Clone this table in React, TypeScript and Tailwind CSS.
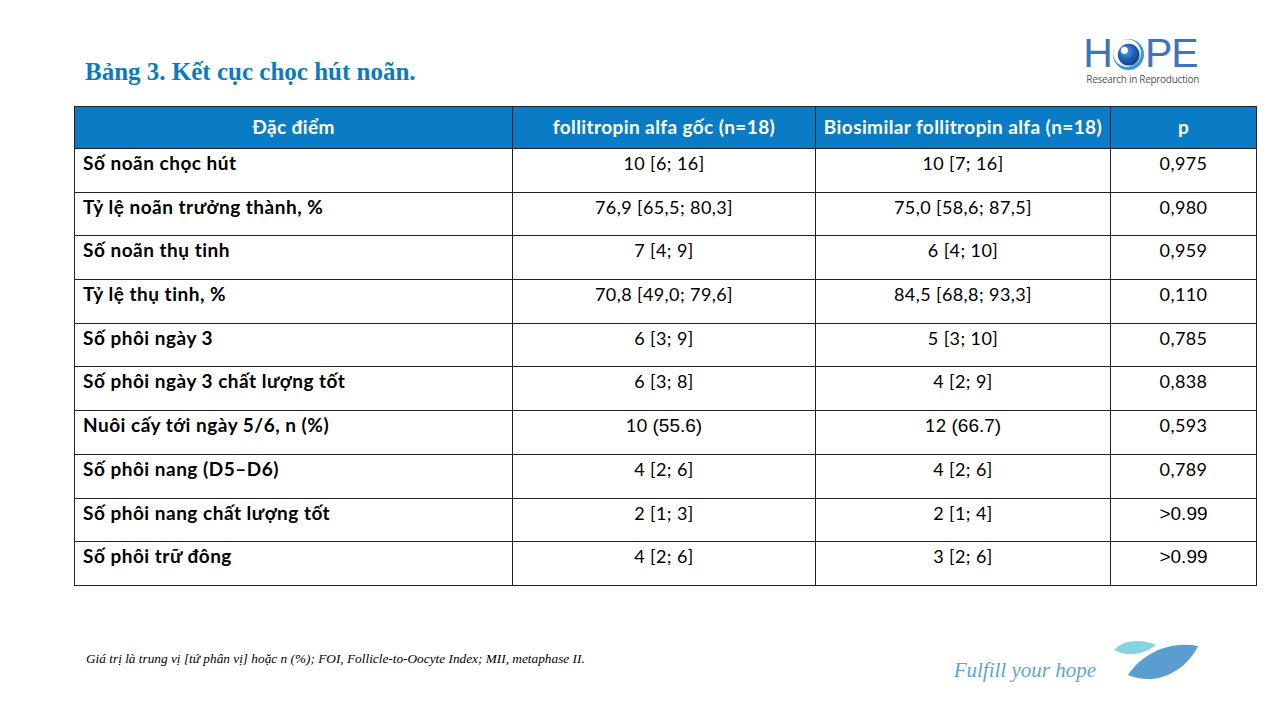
const rows: { label: string; a: React.ReactNode; b: React.ReactNode; p: React.ReactNode }[] = [
  { label: "Số noãn chọc hút", a: "10 [6; 16]", b: "10 [7; 16]", p: "0,975" },
  { label: "Tỷ lệ noãn trưởng thành, %", a: "76,9 [65,5; 80,3]", b: "75,0 [58,6; 87,5]", p: "0,980" },
  { label: "Số noãn thụ tinh", a: "7 [4; 9]", b: "6 [4; 10]", p: "0,959" },
  { label: "Tỷ lệ thụ tinh, %", a: "70,8 [49,0; 79,6]", b: "84,5 [68,8; 93,3]", p: "0,110" },
  { label: "Số phôi ngày 3", a: "6 [3; 9]", b: "5 [3; 10]", p: "0,785" },
  { label: "Số phôi ngày 3 chất lượng tốt", a: "6 [3; 8]", b: "4 [2; 9]", p: "0,838" },
  {
    label: "Nuôi cấy tới ngày 5/6, n (%)",
    a: (<>10 <span className="font-['Liberation_Sans',sans-serif] text-[19px] tracking-normal">(55.6)</span></>),
    b: (<>12 <span className="font-['Liberation_Sans',sans-serif] text-[19px] tracking-normal">(66.7)</span></>),
    p: "0,593",
  },
  { label: "Số phôi nang (D5–D6)", a: "4 [2; 6]", b: "4 [2; 6]", p: "0,789" },
  {
    label: "Số phôi nang chất lượng tốt",
    a: "2 [1; 3]",
    b: "2 [1; 4]",
    p: <span className="font-['Liberation_Sans',sans-serif] text-[19px] tracking-normal">&gt;0.99</span>,
  },
  {
    label: "Số phôi trữ đông",
    a: "4 [2; 6]",
    b: "3 [2; 6]",
    p: <span className="font-['Liberation_Sans',sans-serif] text-[19px] tracking-normal">&gt;0.99</span>,
  },
];

function HopeLogo() {
  return (
    <div className="flex flex-col items-start -mt-[5px]">
      <div className="flex items-center text-[#3d74bd] font-['Liberation_Sans',sans-serif] text-[41px] leading-none tracking-[-1px]">
        <span>H</span>
        <svg width="31" height="31" viewBox="0 0 30 30" className="mx-[1px] mt-[1px]">
          <defs>
            <radialGradient id="eye" cx="0.38" cy="0.35" r="0.7">
              <stop offset="0" stopColor="#4aa0e4" />
              <stop offset="0.55" stopColor="#1c5fb2" />
              <stop offset="1" stopColor="#123f80" />
            </radialGradient>
          </defs>
          <circle cx="15" cy="15" r="15" fill="#3597dc" />
          <circle cx="13.6" cy="13.6" r="13.4" fill="#ffffff" />
          <circle cx="15.2" cy="15.2" r="10.5" fill="url(#eye)" />
          <circle cx="11" cy="11" r="3.4" fill="#ffffff" />
        </svg>
        <span>PE</span>
      </div>
      <div className="text-[10px] text-[#555] font-['Open_Sans',sans-serif] leading-none tracking-[-0.3px] ml-[3px]">
        Research in Reproduction
      </div>
    </div>
  );
}

function Leaves() {
  return (
    <svg width="86" height="42" viewBox="0 0 86 42">
      <path d="M0 9 C 10 -2, 28 -2, 42 4 C 30 14, 12 16, 0 9 Z" fill="#86d4e3" />
      <path d="M14 34 C 30 10, 58 0, 84 5 C 72 30, 42 46, 14 34 Z" fill="#5b9dd0" />
    </svg>
  );
}

export default function App() {
  return (
    <div className="w-[1280px] h-[720px] bg-white overflow-hidden font-['Lato','Open_Sans',sans-serif] text-black">
      <div className="flex items-start justify-between pl-[85px] pr-[81px] pt-[38px]">
        <h1 className="mt-[19px] text-[25px] leading-[30px] font-bold text-[#0b7bc1] font-['Liberation_Serif','DejaVu_Serif',serif]">
          Bảng 3. Kết cục chọc hút noãn.
        </h1>
        <HopeLogo />
      </div>

      <div className="pl-[74px] pt-[19px]">
        <table className="border-collapse w-[1182px] table-fixed">
          <colgroup>
            <col className="w-[438px]" />
            <col className="w-[303px]" />
            <col className="w-[295px]" />
            <col className="w-[146px]" />
          </colgroup>
          <thead>
            <tr className="h-[42px] bg-[#0a7cc6] text-white text-[19px] tracking-[0.4px]">
              <th className="border border-[#222] font-bold">Đặc điểm</th>
              <th className="border border-[#222] font-bold">follitropin alfa gốc (n=18)</th>
              <th className="border border-[#222] font-bold whitespace-nowrap">Biosimilar follitropin alfa (n=18)</th>
              <th className="border border-[#222] font-bold">p</th>
            </tr>
          </thead>
          <tbody>
            {rows.map((r, i) => (
              <tr key={i} className="h-[43.7px] text-[18px] leading-[22px] tracking-[0.4px]">
                <td className="border border-[#222] align-top pt-[3px] pl-[8px] font-bold text-[19px] tracking-[0.5px]">{r.label}</td>
                <td className="border border-[#222] align-top pt-[3px] text-center">{r.a}</td>
                <td className="border border-[#222] align-top pt-[3px] text-center">{r.b}</td>
                <td className="border border-[#222] align-top pt-[3px] text-center">{r.p}</td>
              </tr>
            ))}
          </tbody>
        </table>
      </div>

      <div className="flex items-end justify-between pl-[86px] pr-[80px] mt-[55px]">
        <p className="mb-[14px] text-[13.3px] italic font-['Liberation_Serif','DejaVu_Serif',serif]">
          Giá trị là trung vị [tứ phân vị] hoặc n (%); FOI, Follicle-to-Oocyte Index; MII, metaphase II.
        </p>
        <div className="flex items-end gap-[18px]">
          <span className="mb-[-4px] text-[21px] text-[#5aa6d8] italic font-['Liberation_Serif',serif]">
            Fulfill your hope
          </span>
          <Leaves />
        </div>
      </div>
    </div>
  );
}
